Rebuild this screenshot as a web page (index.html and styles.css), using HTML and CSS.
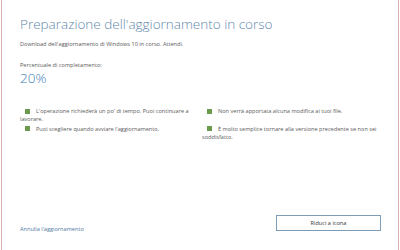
FILE: index.html
```html
<!DOCTYPE html>
<html lang="it">
<head>
<meta charset="utf-8">
<link rel="stylesheet" href="styles.css">
</head>
<body>
<div class="window">
  <h1 class="title">Preparazione dell'aggiornamento in corso</h1>
  <p class="sub">Download dell'aggiornamento di Windows 10 in corso. Attendi.</p>
  <p class="label">Percentuale di completamento:</p>
  <div class="pct">20%</div>
  <div class="notes">
    <p class="note"><span class="dot"></span>L'operazione richiederà un po' di tempo. Puoi continuare a lavorare.</p>
    <p class="note"><span class="dot"></span>Non verrà apportata alcuna modifica ai tuoi file.</p>
    <p class="note"><span class="dot"></span>Puoi scegliere quando avviare l'aggiornamento.</p>
    <p class="note"><span class="dot"></span>È molto semplice tornare alla versione precedente se non sei soddisfatto.</p>
  </div>
  <div class="footer">
    <a class="cancel">Annulla l'aggiornamento</a>
    <button class="btn">Riduci a icona</button>
  </div>
</div>
</body>
</html>
```
FILE: styles.css
```css
html, body { margin: 0; padding: 0; background: #fff; }
body { width: 400px; height: 250px; overflow: hidden; }
.window {
  box-sizing: border-box;
  width: 398px;
  height: 250px;
  margin-left: 1px;
  border-left: 1px solid #d9b3ab;
  border-right: 1px solid #d9b3ab;
  padding: 15px 0 0 18px;
  display: flex;
  flex-direction: column;
  font-family: "Open Sans", "Liberation Sans", sans-serif;
  color: #555;
}
.title {
  margin: 0;
  font-weight: 300;
  font-size: 13.5px;
  line-height: 18px;
  color: #5f88ac;
}
.sub {
  margin: 7px 0 0;
  font-size: 5.6px;
  line-height: 8px;
  color: #5a5a5a;
}
.label {
  margin: 13px 0 0;
  font-size: 5.6px;
  line-height: 8px;
  color: #5a5a5a;
}
.pct {
  margin-top: 1px;
  font-size: 13.5px;
  font-weight: 300;
  line-height: 16px;
  color: #3d7ab5;
}
.notes {
  margin-top: 21px;
  display: grid;
  grid-template-columns: 182px 190px;
  row-gap: 1.5px;
}
.note {
  margin: 0;
  font-size: 5.6px;
  line-height: 8px;
  color: #5a5a5a;
}
.dot {
  display: inline-block;
  width: 5px;
  height: 5px;
  background: #6b9a4c;
  margin: 0 6px 0 5px;
  vertical-align: -0.5px;
}
.footer {
  margin-top: auto;
  margin-bottom: 17px;
  display: flex;
  align-items: flex-end;
  justify-content: space-between;
  padding-right: 17px;
}
.cancel {
  font-size: 5.6px;
  line-height: 8px;
  color: #4f77a0;
}
.btn {
  box-sizing: border-box;
  width: 105px;
  height: 16px;
  margin-bottom: 2px;
  border: 1px solid #7c9cb8;
  background: #fff;
  font-family: "Open Sans", "Liberation Sans", sans-serif;
  font-size: 5.6px;
  color: #333;
  padding: 0;
}
```
